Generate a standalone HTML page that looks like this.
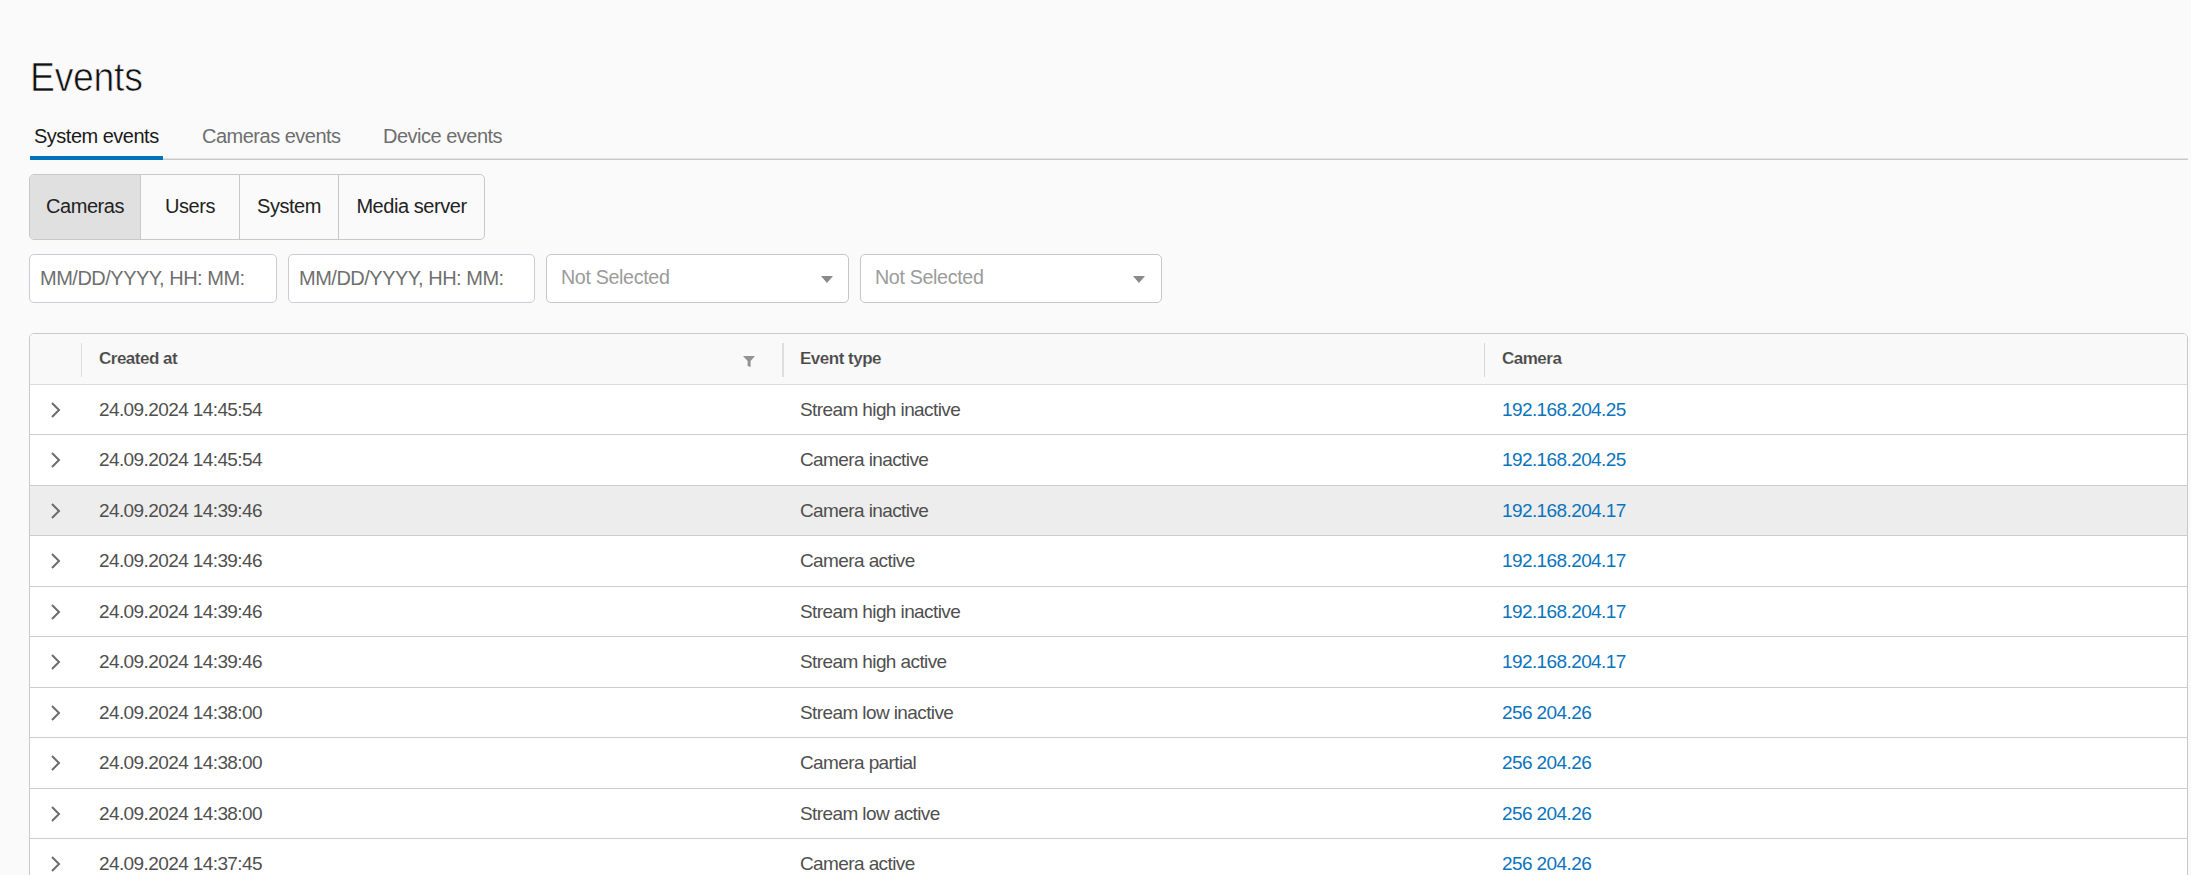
<!DOCTYPE html>
<html><head><meta charset="utf-8">
<style>
*{box-sizing:border-box;margin:0;padding:0}
html,body{width:2191px;height:875px;overflow:hidden;background:#fafafa;font-family:"Liberation Sans",sans-serif}
.abs{position:absolute}
#title{left:30px;top:52px;font-size:40px;letter-spacing:-0.3px;line-height:50px;color:#111;-webkit-text-stroke:0.7px #fafafa;transform:scaleX(0.935);transform-origin:0 0;white-space:nowrap}
.tab{position:absolute;top:124px;font-size:20px;letter-spacing:-0.5px;line-height:24px;color:#6e6e6e;white-space:nowrap}
#tabline{left:30px;top:158px;width:2158px;height:2px;background:linear-gradient(#e2e2e2 50%,#c9c9c9 50%)}
#tabul{left:30px;top:156px;width:133px;height:4px;background:#0071bb}
#btngrp{left:29px;top:174px;width:456px;height:66px;border:1px solid #c8c8c8;border-radius:5px;overflow:hidden;display:flex;background:#fafafa}
#btngrp div{height:64px;line-height:63px;font-size:20px;letter-spacing:-0.45px;color:#222;text-align:center;border-left:1px solid #c8c8c8}
#btngrp div:first-child{border-left:none;background:#e0e0e0}
.inp{position:absolute;top:254px;height:49px;border:1px solid #c9cdd2;border-radius:5px;background:#fff;font-size:20px;letter-spacing:-0.5px;line-height:46px;color:#6f6f6f;padding-left:10px;white-space:nowrap}
.sel{border-color:#c6c6c6;color:#9b9b9b;padding-left:14px;line-height:45px;letter-spacing:-0.35px;font-size:19.7px}
.caret{position:absolute;top:21px;width:0;height:0;border-left:6px solid transparent;border-right:6px solid transparent;border-top:7px solid #8a8a8a}
#table{left:29px;top:333px;width:2159px;height:600px;border:1px solid #c9c9c9;border-radius:5px;background:#fff;overflow:hidden}
.hdr{position:absolute;left:0;top:0;width:100%;height:51px;background:#f9f9f9;border-bottom:1px solid #dcdcdc}
.hdr .h{position:absolute;top:0;line-height:50px;font-size:17px;letter-spacing:-0.5px;font-weight:bold;color:#484848;white-space:nowrap;-webkit-text-stroke:0.15px #f9f9f9}
.vdiv{position:absolute;top:9px;height:34px;width:2px;background:#dedede}
.row{position:absolute;left:0;width:100%;height:51px;border-bottom:1px solid #cdcdcd;background:#fff}
.row.hl{background:#ededed}
.row .c{position:absolute;top:0;line-height:50px;font-size:19px;color:#4f4f4f;white-space:nowrap;letter-spacing:-0.6px}
.row .lnk{color:#0b74bd}
.chev{position:absolute;left:21px;top:17px}
</style></head><body>
<div id="title" class="abs">Events</div>
<div class="tab" style="left:34px;color:#1a1a1a">System events</div>
<div class="tab" style="left:202px">Cameras events</div>
<div class="tab" style="left:383px">Device events</div>
<div id="tabline" class="abs"></div>
<div id="tabul" class="abs"></div>

<div id="btngrp" class="abs">
<div style="width:110px">Cameras</div>
<div style="width:99px">Users</div>
<div style="width:99px">System</div>
<div style="width:146px">Media server</div>
</div>

<div class="inp" style="left:29px;width:248px">MM/DD/YYYY, HH: MM:</div>
<div class="inp" style="left:288px;width:247px">MM/DD/YYYY, HH: MM:</div>
<div class="inp sel" style="left:546px;width:303px">Not Selected<span class="caret" style="left:274px"></span></div>
<div class="inp sel" style="left:860px;width:302px">Not Selected<span class="caret" style="left:272px"></span></div>

<div id="table" class="abs">
 <div class="hdr">
  <div class="vdiv" style="left:51px;width:1px"></div>
  <div class="h" style="left:69px">Created at</div>
  <svg class="abs" style="left:713px;top:22px" width="12" height="12" viewBox="0 0 12 12"><path d="M0 0H12L7.6 4.9V11L4.6 10.1V4.9Z" fill="#939393"/></svg>
  <div class="vdiv" style="left:752px"></div>
  <div class="h" style="left:770px">Event type</div>
  <div class="vdiv" style="left:1454px;width:1px;background:#d6d6d6"></div>
  <div class="h" style="left:1472px">Camera</div>
 </div>
<div class="row" style="top:51px;height:50px"><svg class="chev" style="left:20px" width="12" height="16" viewBox="0 0 12 16"><path d="M2 1L9 8L2 15" fill="none" stroke="#6c6c6c" stroke-width="2"/></svg><div class="c" style="left:69px">24.09.2024 14:45:54</div><div class="c" style="left:770px">Stream high inactive</div><div class="c lnk" style="left:1472px">192.168.204.25</div></div>
<div class="row" style="top:101px;height:51px"><svg class="chev" style="left:20px" width="12" height="16" viewBox="0 0 12 16"><path d="M2 1L9 8L2 15" fill="none" stroke="#6c6c6c" stroke-width="2"/></svg><div class="c" style="left:69px">24.09.2024 14:45:54</div><div class="c" style="left:770px">Camera inactive</div><div class="c lnk" style="left:1472px">192.168.204.25</div></div>
<div class="row hl" style="top:152px;height:50px"><svg class="chev" style="left:20px" width="12" height="16" viewBox="0 0 12 16"><path d="M2 1L9 8L2 15" fill="none" stroke="#6c6c6c" stroke-width="2"/></svg><div class="c" style="left:69px">24.09.2024 14:39:46</div><div class="c" style="left:770px">Camera inactive</div><div class="c lnk" style="left:1472px">192.168.204.17</div></div>
<div class="row" style="top:202px;height:51px"><svg class="chev" style="left:20px" width="12" height="16" viewBox="0 0 12 16"><path d="M2 1L9 8L2 15" fill="none" stroke="#6c6c6c" stroke-width="2"/></svg><div class="c" style="left:69px">24.09.2024 14:39:46</div><div class="c" style="left:770px">Camera active</div><div class="c lnk" style="left:1472px">192.168.204.17</div></div>
<div class="row" style="top:253px;height:50px"><svg class="chev" style="left:20px" width="12" height="16" viewBox="0 0 12 16"><path d="M2 1L9 8L2 15" fill="none" stroke="#6c6c6c" stroke-width="2"/></svg><div class="c" style="left:69px">24.09.2024 14:39:46</div><div class="c" style="left:770px">Stream high inactive</div><div class="c lnk" style="left:1472px">192.168.204.17</div></div>
<div class="row" style="top:303px;height:51px"><svg class="chev" style="left:20px" width="12" height="16" viewBox="0 0 12 16"><path d="M2 1L9 8L2 15" fill="none" stroke="#6c6c6c" stroke-width="2"/></svg><div class="c" style="left:69px">24.09.2024 14:39:46</div><div class="c" style="left:770px">Stream high active</div><div class="c lnk" style="left:1472px">192.168.204.17</div></div>
<div class="row" style="top:354px;height:50px"><svg class="chev" style="left:20px" width="12" height="16" viewBox="0 0 12 16"><path d="M2 1L9 8L2 15" fill="none" stroke="#6c6c6c" stroke-width="2"/></svg><div class="c" style="left:69px">24.09.2024 14:38:00</div><div class="c" style="left:770px">Stream low inactive</div><div class="c lnk" style="left:1472px">256 204.26</div></div>
<div class="row" style="top:404px;height:51px"><svg class="chev" style="left:20px" width="12" height="16" viewBox="0 0 12 16"><path d="M2 1L9 8L2 15" fill="none" stroke="#6c6c6c" stroke-width="2"/></svg><div class="c" style="left:69px">24.09.2024 14:38:00</div><div class="c" style="left:770px">Camera partial</div><div class="c lnk" style="left:1472px">256 204.26</div></div>
<div class="row" style="top:455px;height:50px"><svg class="chev" style="left:20px" width="12" height="16" viewBox="0 0 12 16"><path d="M2 1L9 8L2 15" fill="none" stroke="#6c6c6c" stroke-width="2"/></svg><div class="c" style="left:69px">24.09.2024 14:38:00</div><div class="c" style="left:770px">Stream low active</div><div class="c lnk" style="left:1472px">256 204.26</div></div>
<div class="row" style="top:505px;height:51px"><svg class="chev" style="left:20px" width="12" height="16" viewBox="0 0 12 16"><path d="M2 1L9 8L2 15" fill="none" stroke="#6c6c6c" stroke-width="2"/></svg><div class="c" style="left:69px">24.09.2024 14:37:45</div><div class="c" style="left:770px">Camera active</div><div class="c lnk" style="left:1472px">256 204.26</div></div>
</div>
</body></html>
